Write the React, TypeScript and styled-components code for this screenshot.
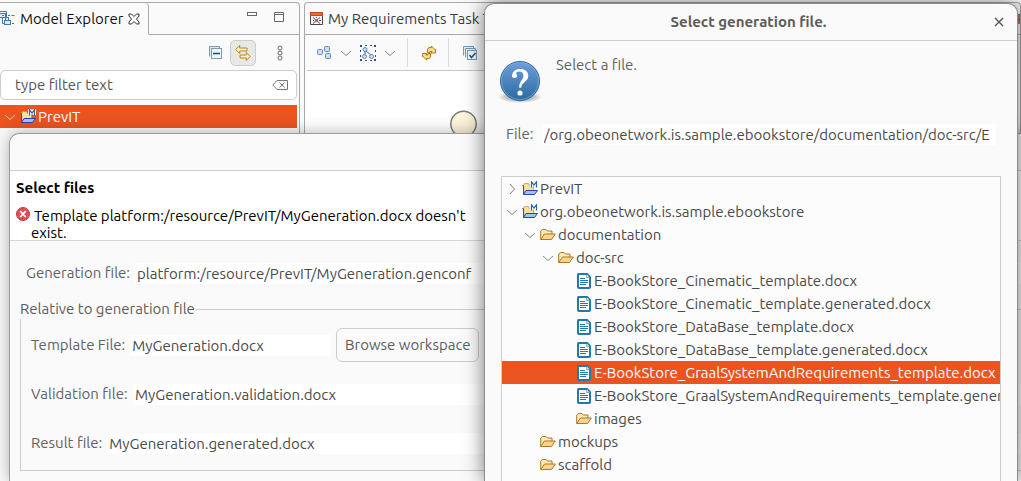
import React from "react";
import styled, { createGlobalStyle, css } from "styled-components";

const GlobalStyle = createGlobalStyle`
  *, *::before, *::after { box-sizing: border-box; }
  body {
    margin: 0;
    overflow: hidden;
    background: #fafafa;
    font-family: Ubuntu, "Noto Sans", sans-serif;
    font-size: 15px;
    line-height: 20px;
    color: #4a4a4a;
  }
  button, input { font: inherit; color: inherit; }
  svg { display: block; flex: none; }
`;

/* ---------- workbench ---------- */

const Workbench = styled.main`
  position: relative;
  display: flex;
  gap: 4px;
  height: 100vh;
  padding-top: 2px;
  overflow: hidden;
`;

const Pane = styled.section<{ $grow?: boolean }>`
  display: flex;
  flex-direction: column;
  min-width: 0;
  border: 1px solid #a8a8a8;
  border-bottom: 0;
  border-left-width: ${(p) => (p.$grow ? 1 : 0)}px;
  border-radius: ${(p) => (p.$grow ? "4px 4px 0 0" : "0 4px 0 0")};
  ${(p) => (p.$grow ? css`flex: 1;` : css`flex: 0 0 300px;`)}
`;

const TabBar = styled.div`
  display: flex;
  height: 32px;
  overflow: hidden;
`;

const Tab = styled.div<{ $active?: boolean; $width?: number }>`
  display: flex;
  align-items: center;
  gap: 4px;
  flex: 0 0 ${(p) => (p.$width ? `${p.$width}px` : "auto")};
  padding: 0 6px 0 ${(p) => (p.$active ? 0 : 5)}px;
  border-right: 1px solid #a8a8a8;
  border-bottom: 1px solid ${(p) => (p.$active ? "transparent" : "#a8a8a8")};
  border-radius: 0 4px 0 0;
  color: ${(p) => (p.$active ? "#111" : "#3c3c3c")};
  white-space: nowrap;
`;

const TabTools = styled.div`
  display: flex;
  flex: 1;
  justify-content: flex-end;
  align-items: flex-start;
  gap: 15px;
  padding: 7px 14px 0 0;
  border-bottom: 1px solid #a8a8a8;
`;

const IconButton = styled.button<{ $pressed?: boolean }>`
  display: grid;
  place-items: center;
  flex: none;
  padding: 0;
  border: 0;
  background: none;
  ${(p) =>
    p.$pressed &&
    css`
      width: 26px;
      height: 26px;
      border: 1px solid #cdcdcd;
      border-radius: 5px;
      background: #e8e8e8;
    `}
`;

const ExplorerTools = styled.div`
  display: flex;
  justify-content: flex-end;
  align-items: center;
  gap: 7px;
  height: 35px;
  padding-right: 11px;
`;

const Spacer = styled.span`
  width: 2px;
`;

const SearchBox = styled.label`
  display: flex;
  align-items: center;
  height: 30px;
  margin-right: 2px;
  padding: 0 8px 0 14px;
  border: 1px solid #cdcdcd;
  border-radius: 5px;
  background: #fff;
`;

const SearchInput = styled.input`
  flex: 1;
  min-width: 0;
  padding: 0;
  border: 0;
  outline: 0;
  background: none;
  &::placeholder { color: #555; opacity: 1; }
`;

const ExplorerTree = styled.ul`
  margin: 5px 2px 0 0;
  padding: 0;
  list-style: none;
`;

const EditorTools = styled.div`
  display: flex;
  align-items: center;
  height: 36px;
  margin: 0 2px;
  padding-left: 9px;
  border-bottom: 1px solid #c6c6c6;
`;

const ToolGroup = styled.div`
  display: flex;
  align-items: center;
  gap: 8px;
  height: 29px;
  padding-right: 11px;
  & + & {
    padding-left: 13px;
    border-left: 1px solid #dcdcdc;
  }
`;

const Canvas = styled.div`
  flex: 1;
  padding: 39px 0 0 144px;
  background: #fff;
`;

/* ---------- windows ---------- */

const Window = styled.section`
  position: absolute;
  display: flex;
  flex-direction: column;
  border: 1px solid #8c8c8c;
  border-bottom: 0;
  border-radius: 10px 10px 0 0;
  background: #fafafa;
`;

const WizardWindow = styled(Window)`
  inset: 133px -60px 0 9px;
  border-color: #9c9c9c;
  box-shadow: 0 0 16px rgba(0, 0, 0, 0.3);
`;

const DialogWindow = styled(Window)`
  inset: 3px 3px 0 484px;
  box-shadow: 0 0 20px rgba(0, 0, 0, 0.55);
`;

const TitleBar = styled.header`
  display: flex;
  align-items: center;
  flex: none;
  height: 37px;
  padding: 0 13px 0 18px;
  border-bottom: 1px solid #cdcdcd;
`;

const WindowTitle = styled.h1`
  flex: 1;
  margin: 0;
  font-size: 15px;
  line-height: 20px;
  font-weight: 700;
  text-align: center;
  color: #5c5c5c;
`;

const WizardBanner = styled.div`
  height: 70px;
  padding: 7px 6px 0;
  border-bottom: 1px solid #d6d6d6;
  background: #fff;
  color: #000;
`;

const BannerTitle = styled.h2`
  margin: 0 0 9px;
  font-size: 15px;
  line-height: 20px;
`;

const BannerMessage = styled.div`
  display: flex;
  gap: 1px;
`;

const MessageText = styled.p`
  width: 450px;
  margin: 0;
  line-height: 17px;
  text-indent: 3px;
`;

const Field = styled.div`
  display: flex;
  align-items: center;
  gap: 5px;
  height: 34px;
  color: #626262;
`;

const FieldLabel = styled.label<{ $width: number }>`
  flex: 0 0 ${(p) => p.$width}px;
  white-space: nowrap;
`;

const FieldInput = styled.input<{ $width?: number }>`
  ${(p) => (p.$width ? css`flex: 0 0 ${p.$width}px;` : css`flex: 1;`)}
  min-width: 0;
  height: 21px;
  padding: 0 2px;
  border: 0;
  outline: 0;
  background: #fff;
  color: #4a4a4a;
`;

const WizardBody = styled.div`
  padding: 15px 10px 0;
  & > ${Field} { padding-left: 6px; }
`;

const Group = styled.fieldset`
  display: flex;
  flex-direction: column;
  gap: 15px;
  min-width: 0;
  margin: 9px 0 0;
  padding: 9px 10px 10px;
  border: 1px solid #cdcdcd;
`;

const Legend = styled.legend`
  margin-left: -11px;
  padding: 0;
  color: #5c5c5c;
  background: #fafafa;
`;

const PushButton = styled.button`
  flex: none;
  width: 143px;
  height: 34px;
  padding: 0;
  border: 1px solid #cdcdcd;
  border-radius: 6px;
  background: #fafafa;
  color: #5c5c5c;
`;

const Prompt = styled.div`
  display: flex;
  gap: 12px;
  padding: 14px 13px 0;
  height: 76px;
`;

const PromptText = styled.p`
  margin: 0;
  color: #626262;
`;

const DialogField = styled(Field)`
  flex: none;
  gap: 8px;
  padding: 0 21px;
`;

const TreeBox = styled.ul`
  flex: 1;
  min-height: 0;
  margin: 25px 16px 0;
  padding: 0;
  overflow: hidden;
  list-style: none;
  border: 1px solid #cdcdcd;
  border-bottom: 0;
  background: #fcfcfc;
`;

const TreeRow = styled.li<{ $depth: number; $selected?: boolean }>`
  display: flex;
  align-items: center;
  gap: 2px;
  height: 23px;
  padding-left: ${(p) => p.$depth * 18 + 2}px;
  white-space: nowrap;
  ${(p) => p.$selected && css`background: #e95420; color: #fff;`}
`;

const Twisty = styled.span`
  display: grid;
  place-items: center;
  flex: 0 0 16px;
`;

/* ---------- icons ---------- */

const Chevron = ({ open, color = "#858585" }: { open?: boolean; color?: string }) => (
  <svg width="12" height="12" viewBox="0 0 12 12" fill="none" stroke={color}>
    <path d={open ? "M1 4l5 4.500 5-4.500" : "M4 1l4.500 5L4 11"} />
  </svg>
);

const ProjectIcon = () => (
  <svg width="16" height="16" viewBox="0 0 16 16">
    <path d="M1.500 4.500l1-2h4l1 2h4v8H2z" fill="#f6dfa4" stroke="#b9995a" strokeWidth=".8" />
    <path d="M.5 4.500h1v9" stroke="#3d4fa5" fill="none" />
    <path d="M1.500 13.500L4 9.500h11.500L12.500 13.500z" fill="#9cc6f5" stroke="#2b3fb0" />
    <path d="M9.500 6V.5l2.500 3L14.500.5V6" fill="none" stroke="#fff" strokeWidth="3" />
    <path d="M9.500 6.500V.8L12 4 14.500.8v5.700" fill="none" stroke="#26689a" strokeWidth="1.200" />
  </svg>
);

const FolderIcon = () => (
  <svg width="16" height="16" viewBox="0 0 16 16" stroke="#b0742a" strokeLinejoin="round">
    <path d="M.7 12.500V4l1.800-1.500h3.500L7.500 4H12v3" fill="#fbe9b8" />
    <path d="M.7 12.500L4.500 7H15.300L11.500 12.500z" fill="#f9d58b" />
  </svg>
);

const FileIcon = () => (
  <svg width="16" height="16" viewBox="0 0 16 16">
    <path d="M2.500 0h9L15 3.500V14a2 2 0 0 1-2 2H3a2 2 0 0 1-2-2V1.500Q1 0 2.500 0z" fill="#2579a9" />
    <path d="M3 2h7.500v3H13v9H3z" fill="#fff" />
    <path d="M11 1.500L13.700 4.500H11z" fill="#c7e3f3" />
    <path d="M4 5.500h5M4 7.500h8M4 9.500h8M4 11.500h6" stroke="#2579a9" />
  </svg>
);

const ExplorerIcon = () => (
  <svg width="16" height="16" viewBox="0 0 16 16" fill="#d8ebfa" stroke="#447aaa">
    <path d="M2.500 7v5.500H4M8 4.500h2M11.500 4.500h3M12 12.500h2" fill="none" />
    <path d="M-.5 2.500V.5h7v6" fill="none" />
    <rect x="-.5" y="2.500" width="6" height="4" />
    <path d="M2 4.500h2" />
    <rect x="5.500" y="6.500" width="3" height="3" />
    <rect x="4.500" y="9.500" width="6" height="4" />
  </svg>
);

const TabCloseIcon = () => (
  <svg width="12" height="12" viewBox="0 0 12 12" fill="none" stroke="#333">
    <path d="M1 1h2.500L6 3.500 8.500 1H11v2L8.500 6 11 9v2H8.500L6 8.500 3.500 11H1V9l2.500-3L1 3z" />
  </svg>
);

const MinimizeIcon = () => (
  <svg width="12" height="12" viewBox="0 0 12 12" fill="none" stroke="#666">
    <rect x="1.500" y="2.500" width="9" height="3" />
  </svg>
);

const MaximizeIcon = () => (
  <svg width="12" height="12" viewBox="0 0 12 12" fill="none" stroke="#666">
    <path d="M1.500 2.500h9v9h-9zM1.500 4.500h9" />
  </svg>
);

const CollapseIcon = () => (
  <svg width="16" height="16" viewBox="0 0 16 16" fill="#d9ecfa" stroke="#8297b5">
    <path d="M2.500 11.500v-10h10v2" />
    <rect x="4.500" y="3.500" width="10" height="10" fill="#e9f7fe" />
    <path d="M6 8.500h7" stroke="#174a7c" strokeWidth="1.500" />
  </svg>
);

const LinkIcon = () => (
  <svg width="16" height="16" viewBox="0 0 16 16" fill="#fff2c5" stroke="#b9821f" strokeLinejoin="round">
    <path d="M.7 4.500l4-4v2.500H12v3H4.700v2.500z" />
    <path d="M15.300 11.500l-4-4V10H5v3h6.300v2.500z" />
  </svg>
);

const MenuDotsIcon = () => (
  <svg width="16" height="16" viewBox="0 0 16 16" fill="#fff" stroke="#666">
    <circle cx="8" cy="3" r="2" />
    <circle cx="8" cy="8" r="2" />
    <circle cx="8" cy="13" r="2" />
  </svg>
);

const ClearIcon = () => (
  <svg width="16" height="12" viewBox="0 0 16 12" fill="none" stroke="#777">
    <path d="M5 1.500h10.500v9H5L.8 6zM7.500 3.500l5 5M12.500 3.500l-5 5" />
  </svg>
);

const DiagramIcon = () => (
  <svg width="14" height="14" viewBox="0 0 14 14">
    <path d="M.5 1.500h12v11H.5z" fill="#f7f3f5" stroke="#51424a" />
    <path d="M0 0h13v4H0z" fill="#c9431c" />
    <path d="M1 2h11" stroke="#f6a04a" />
    <path d="M3 5.500l7 6M10 5.500l-7 6M3 8.500h1M9 8.500h2M6.500 5v1" stroke="#5d4653" />
    <circle cx="6.500" cy="8.500" r="1.500" fill="#8b7380" />
  </svg>
);

const ArrangeIcon = () => (
  <svg width="16" height="16" viewBox="0 0 16 16" fill="#cfe0f6" stroke="#5f84b8">
    <rect x="1.500" y="4.500" width="5" height="5" rx="1" />
    <rect x="8.500" y="1.500" width="5" height="5" rx="1" />
    <rect x="9.500" y="8.500" width="5" height="5" rx="1" />
  </svg>
);

const SelectAllIcon = () => (
  <svg width="16" height="16" viewBox="0 0 16 16" fill="#cfe0f6" stroke="#5f84b8">
    <path d="M5 5l8 7M5 5v6" stroke="#49658f" />
    <circle cx="5" cy="4.500" r="2" />
    <circle cx="4.500" cy="11.500" r="2" />
    <circle cx="11.500" cy="11.500" r="2" />
    <path
      d="M0 0h2v2H0zM5 0h2v1H5zM10 0h2v1h-2zM14 0h2v2h-2zM0 5h1v2H0zM0 10h1v2H0zM0 14h2v2H0zM5 15h2v1H5zM10 15h2v1h-2zM15 5h1v2h-1zM15 10h1v2h-1zM14 14h2v2h-2z"
      fill="#27508c"
      stroke="none"
    />
  </svg>
);

const RefreshIcon = () => (
  <svg width="16" height="16" viewBox="0 0 16 16" fill="#fbe08a" stroke="#b37a12" strokeLinejoin="round">
    <path d="M6.500 7.500V5Q6.500 2.500 9 2.500h1.500v-1.500l1.500 1.500 2.500 2.500v-.5 3.500h-4.500l1-1.500H9v1z" />
    <path d="M9.500 8.500V11Q9.500 13.500 7 13.500H5.500V15L4 13.500 1.500 11v.5V8.500H6L5 10h2V8.500z" />
  </svg>
);

const LayersIcon = () => (
  <svg width="16" height="16" viewBox="0 0 16 16" fill="#dff0f8" stroke="#6f9cba">
    <path d="M1.500 10.500v-9h10v2M3.500 12.500v-9h10v2" />
    <rect x="5.500" y="5.500" width="9" height="9" fill="#edf8fc" />
    <path d="M7.500 10l2 2.500 4-4.500" fill="none" stroke="#244f79" strokeWidth="1.500" />
  </svg>
);

const EventNode = () => (
  <svg width="28" height="28" viewBox="0 0 28 28">
    <circle cx="14.500" cy="14" r="12.700" fill="#fdf4da" stroke="#7d7d78" strokeWidth="1.500" />
  </svg>
);

const ErrorIcon = () => (
  <svg width="14" height="14" viewBox="0 0 14 14">
    <circle cx="7" cy="7" r="6.500" fill="#dc5055" stroke="#c23b42" />
    <path d="M4.200 4l5.600 6M9.800 4l-5.600 6" stroke="#fff" strokeWidth="1.800" />
  </svg>
);

const QuestionIcon = () => (
  <svg width="46" height="49" viewBox="0 -3 46 49">
    <defs>
      <linearGradient id="ball" x1="0" y1="0" x2="0" y2="1">
        <stop offset="0" stopColor="#6f9fdc" />
        <stop offset="1" stopColor="#2a6a9f" />
      </linearGradient>
      <radialGradient id="shade">
        <stop offset="0.600" stopColor="#000" stopOpacity=".25" />
        <stop offset="1" stopColor="#000" stopOpacity="0" />
      </radialGradient>
    </defs>
    <ellipse cx="22" cy="39" rx="22" ry="6" fill="url(#shade)" />
    <circle cx="22" cy="23" r="19.500" fill="url(#ball)" stroke="#2b659b" />
    <circle cx="22" cy="23" r="18.500" fill="none" stroke="#8fb6e4" strokeOpacity=".6" />
    <path
      d="M14 18.500C14 13.500 17.500 11 22 11c5 0 8.300 2.500 8.300 6.700 0 3.300-2 4.800-4.200 6.800-1.900 1.700-2.700 2.800-2.900 5.300h-2c-.2-3.500.8-5.300 2.200-7.400 1.200-1.700 2-2.900 2-5 0-2.700-1.600-4-4-4-1.900 0-3.200.8-3.200 1.800 0 .9.900 1.300.9 2.500 0 1.200-1 2.200-2.400 2.200-1.600 0-2.700-.6-2.700-1.400z"
      fill="#fff"
    />
    <circle cx="22" cy="35" r="2.600" fill="#fff" />
  </svg>
);

const CloseIcon = () => (
  <svg width="10" height="10" viewBox="0 0 10 10" stroke="#555" strokeWidth="1.400">
    <path d="M1 1l8 8M9 1L1 9" />
  </svg>
);

/* ---------- content ---------- */

type Node = {
  label: string;
  depth: number;
  icon: "project" | "folder" | "file";
  state?: "open" | "closed";
  selected?: boolean;
};

const nodes: Node[] = [
  { label: "PrevIT", depth: 0, icon: "project", state: "closed" },
  { label: "org.obeonetwork.is.sample.ebookstore", depth: 0, icon: "project", state: "open" },
  { label: "documentation", depth: 1, icon: "folder", state: "open" },
  { label: "doc-src", depth: 2, icon: "folder", state: "open" },
  { label: "E-BookStore_Cinematic_template.docx", depth: 3, icon: "file" },
  { label: "E-BookStore_Cinematic_template.generated.docx", depth: 3, icon: "file" },
  { label: "E-BookStore_DataBase_template.docx", depth: 3, icon: "file" },
  { label: "E-BookStore_DataBase_template.generated.docx", depth: 3, icon: "file" },
  { label: "E-BookStore_GraalSystemAndRequirements_template.docx", depth: 3, icon: "file", selected: true },
  { label: "E-BookStore_GraalSystemAndRequirements_template.generated.docx", depth: 3, icon: "file" },
  { label: "images", depth: 3, icon: "folder" },
  { label: "mockups", depth: 1, icon: "folder" },
  { label: "scaffold", depth: 1, icon: "folder" },
];

const icons = { project: ProjectIcon, folder: FolderIcon, file: FileIcon };

function TreeItem({ node }: { node: Node }) {
  const Icon = icons[node.icon];
  return (
    <TreeRow
      role="treeitem"
      aria-level={node.depth + 1}
      aria-selected={!!node.selected}
      $depth={node.depth}
      $selected={node.selected}
    >
      <Twisty>
        {node.state && <Chevron open={node.state === "open"} color={node.selected ? "#f8c4ae" : undefined} />}
      </Twisty>
      <Icon />
      <span>{node.label}</span>
    </TreeRow>
  );
}

function ModelExplorer() {
  return (
    <Pane>
      <TabBar>
        <Tab $active $width={149}>
          <ExplorerIcon />
          <span>Model Explorer</span>
          <IconButton aria-label="Close Model Explorer"><TabCloseIcon /></IconButton>
        </Tab>
        <TabTools>
          <IconButton aria-label="Minimize"><MinimizeIcon /></IconButton>
          <IconButton aria-label="Maximize"><MaximizeIcon /></IconButton>
        </TabTools>
      </TabBar>
      <ExplorerTools>
        <IconButton aria-label="Collapse All"><CollapseIcon /></IconButton>
        <IconButton aria-label="Link with Editor" $pressed><LinkIcon /></IconButton>
        <Spacer />
        <IconButton aria-label="View Menu"><MenuDotsIcon /></IconButton>
      </ExplorerTools>
      <SearchBox>
        <SearchInput aria-label="Filter" placeholder="type filter text" />
        <ClearIcon />
      </SearchBox>
      <ExplorerTree role="tree">
        <TreeItem node={{ label: "PrevIT", depth: 0, icon: "project", state: "open", selected: true }} />
      </ExplorerTree>
    </Pane>
  );
}

function Editor() {
  return (
    <Pane $grow>
      <TabBar>
        <Tab $width={330}>
          <DiagramIcon />
          <span>My Requirements Task T</span>
        </Tab>
        <Tab $width={359} />
        <Tab $width={200}>
          <DiagramIcon />
          <span>R</span>
        </Tab>
      </TabBar>
      <EditorTools>
        <ToolGroup>
          <IconButton aria-label="Arrange"><ArrangeIcon /></IconButton>
          <IconButton aria-label="Arrange options"><Chevron open /></IconButton>
          <IconButton aria-label="Select"><SelectAllIcon /></IconButton>
          <IconButton aria-label="Select options"><Chevron open /></IconButton>
        </ToolGroup>
        <ToolGroup>
          <IconButton aria-label="Refresh"><RefreshIcon /></IconButton>
        </ToolGroup>
        <ToolGroup>
          <IconButton aria-label="Layers"><LayersIcon /></IconButton>
        </ToolGroup>
      </EditorTools>
      <Canvas><EventNode /></Canvas>
    </Pane>
  );
}

function GenerationWizard() {
  return (
    <WizardWindow role="dialog" aria-label="Select files">
      <TitleBar />
      <WizardBanner>
        <BannerTitle>Select files</BannerTitle>
        <BannerMessage>
          <ErrorIcon />
          <MessageText>Template platform:/resource/PrevIT/MyGeneration.docx doesn't exist.</MessageText>
        </BannerMessage>
      </WizardBanner>
      <WizardBody>
        <Field>
          <FieldLabel htmlFor="generation" $width={102}>Generation file:</FieldLabel>
          <FieldInput id="generation" defaultValue="platform:/resource/PrevIT/MyGeneration.genconf" />
        </Field>
        <Group>
          <Legend>Relative to generation file</Legend>
          <Field>
            <FieldLabel htmlFor="template" $width={94}>Template File:</FieldLabel>
            <FieldInput id="template" $width={201} defaultValue="MyGeneration.docx" />
            <PushButton>Browse workspace</PushButton>
            <PushButton aria-label="Browse file system" />
          </Field>
          <Field>
            <FieldLabel htmlFor="validation" $width={97}>Validation file:</FieldLabel>
            <FieldInput id="validation" defaultValue="MyGeneration.validation.docx" />
          </Field>
          <Field>
            <FieldLabel htmlFor="result" $width={70}>Result file:</FieldLabel>
            <FieldInput id="result" defaultValue="MyGeneration.generated.docx" />
          </Field>
        </Group>
      </WizardBody>
    </WizardWindow>
  );
}

function FileDialog() {
  return (
    <DialogWindow role="dialog" aria-labelledby="dialog-title">
      <TitleBar>
        <WindowTitle id="dialog-title">Select generation file.</WindowTitle>
        <IconButton aria-label="Close"><CloseIcon /></IconButton>
      </TitleBar>
      <Prompt>
        <QuestionIcon />
        <PromptText>Select a file.</PromptText>
      </Prompt>
      <DialogField>
        <FieldLabel htmlFor="path" $width={28}>File:</FieldLabel>
        <FieldInput
          id="path"
          defaultValue="/org.obeonetwork.is.sample.ebookstore/documentation/doc-src/E"
        />
      </DialogField>
      <TreeBox role="tree">
        {nodes.map((node) => (
          <TreeItem key={node.label} node={node} />
        ))}
      </TreeBox>
    </DialogWindow>
  );
}

export default function App() {
  return (
    <>
      <GlobalStyle />
      <Workbench>
        <ModelExplorer />
        <Editor />
        <GenerationWizard />
        <FileDialog />
      </Workbench>
    </>
  );
}
